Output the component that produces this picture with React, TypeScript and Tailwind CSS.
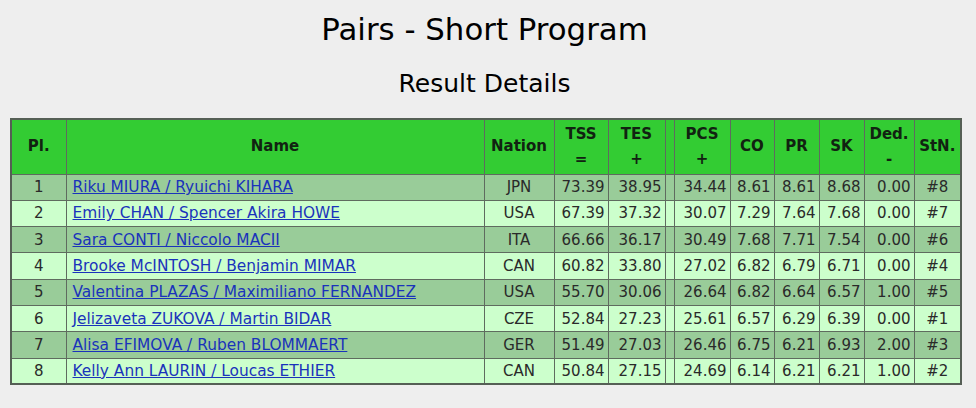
import React from "react";

type Row = {
  pl: number;
  name: string;
  nation: string;
  tss: string;
  tes: string;
  pcs: string;
  co: string;
  pr: string;
  sk: string;
  ded: string;
  stn: string;
};

const ROWS: Row[] = [
  { pl: 1, name: "Riku MIURA / Ryuichi KIHARA", nation: "JPN", tss: "73.39", tes: "38.95", pcs: "34.44", co: "8.61", pr: "8.61", sk: "8.68", ded: "0.00", stn: "#8" },
  { pl: 2, name: "Emily CHAN / Spencer Akira HOWE", nation: "USA", tss: "67.39", tes: "37.32", pcs: "30.07", co: "7.29", pr: "7.64", sk: "7.68", ded: "0.00", stn: "#7" },
  { pl: 3, name: "Sara CONTI / Niccolo MACII", nation: "ITA", tss: "66.66", tes: "36.17", pcs: "30.49", co: "7.68", pr: "7.71", sk: "7.54", ded: "0.00", stn: "#6" },
  { pl: 4, name: "Brooke McINTOSH / Benjamin MIMAR", nation: "CAN", tss: "60.82", tes: "33.80", pcs: "27.02", co: "6.82", pr: "6.79", sk: "6.71", ded: "0.00", stn: "#4" },
  { pl: 5, name: "Valentina PLAZAS / Maximiliano FERNANDEZ", nation: "USA", tss: "55.70", tes: "30.06", pcs: "26.64", co: "6.82", pr: "6.64", sk: "6.57", ded: "1.00", stn: "#5" },
  { pl: 6, name: "Jelizaveta ZUKOVA / Martin BIDAR", nation: "CZE", tss: "52.84", tes: "27.23", pcs: "25.61", co: "6.57", pr: "6.29", sk: "6.39", ded: "0.00", stn: "#1" },
  { pl: 7, name: "Alisa EFIMOVA / Ruben BLOMMAERT", nation: "GER", tss: "51.49", tes: "27.03", pcs: "26.46", co: "6.75", pr: "6.21", sk: "6.93", ded: "2.00", stn: "#3" },
  { pl: 8, name: "Kelly Ann LAURIN / Loucas ETHIER", nation: "CAN", tss: "50.84", tes: "27.15", pcs: "24.69", co: "6.14", pr: "6.21", sk: "6.21", ded: "1.00", stn: "#2" },
];

const th = "border border-[#5f6b5f] px-[1px] py-[1px] text-center align-middle font-bold";
const td = "border border-[#5f6b5f] px-[3px] py-0 align-middle";
const num = `${td} text-right`;

export default function App() {
  return (
    <div className="min-h-[408px] w-[976px] bg-[#eeeeee] font-['DejaVu_Sans',Verdana,sans-serif] text-black">
      <div className="w-[969px] pt-[11px]">
        <h1 className="text-center text-[30.8px] leading-[36px]">Pairs - Short Program</h1>
        <h2 className="mt-[23px] text-center text-[25px] leading-[28px]">Result Details</h2>

        <table className="ml-[10px] mt-[20px] w-[950px] table-fixed border-collapse border-2 border-[#555f55] text-[15px] text-[#2a2a2a]">
          <colgroup>
            <col className="w-[55px]" />
            <col className="w-[418px]" />
            <col className="w-[70px]" />
            <col className="w-[54px]" />
            <col className="w-[57px]" />
            <col className="w-[9px]" />
            <col className="w-[56px]" />
            <col className="w-[44px]" />
            <col className="w-[45px]" />
            <col className="w-[45px]" />
            <col className="w-[50px]" />
            <col className="w-[47px]" />
          </colgroup>
          <thead>
            <tr className="h-[55px] bg-[#33cc33] text-[15px] leading-[25px] text-[#112211]">
              <th className={th}>Pl.</th>
              <th className={th}>Name</th>
              <th className={th}>Nation</th>
              <th className={th}>
                TSS
                <br />=
              </th>
              <th className={th}>
                TES
                <br />+
              </th>
              <th className={th}></th>
              <th className={th}>
                PCS
                <br />+
              </th>
              <th className={th}>CO</th>
              <th className={th}>PR</th>
              <th className={th}>SK</th>
              <th className={th}>
                Ded.
                <br />-
              </th>
              <th className={th}>StN.</th>
            </tr>
          </thead>
          <tbody>
            {ROWS.map((r, i) => (
              <tr key={r.pl} className={`h-[26.3px] leading-[18px] ${i % 2 === 0 ? "bg-[#99cc99]" : "bg-[#ccffcc]"}`}>
                <td className={`${td} text-center`}>{r.pl}</td>
                <td className={`${td} pl-[6px]`}>
                  <a href="#" className="text-[15.4px] text-[#1a33bb] underline">
                    {r.name}
                  </a>
                </td>
                <td className={`${td} text-center`}>{r.nation}</td>
                <td className={num}>{r.tss}</td>
                <td className={num}>{r.tes}</td>
                <td className={td}></td>
                <td className={num}>{r.pcs}</td>
                <td className={num}>{r.co}</td>
                <td className={num}>{r.pr}</td>
                <td className={num}>{r.sk}</td>
                <td className={num}>{r.ded}</td>
                <td className={`${td} text-center`}>{r.stn}</td>
              </tr>
            ))}
          </tbody>
        </table>
      </div>
    </div>
  );
}
